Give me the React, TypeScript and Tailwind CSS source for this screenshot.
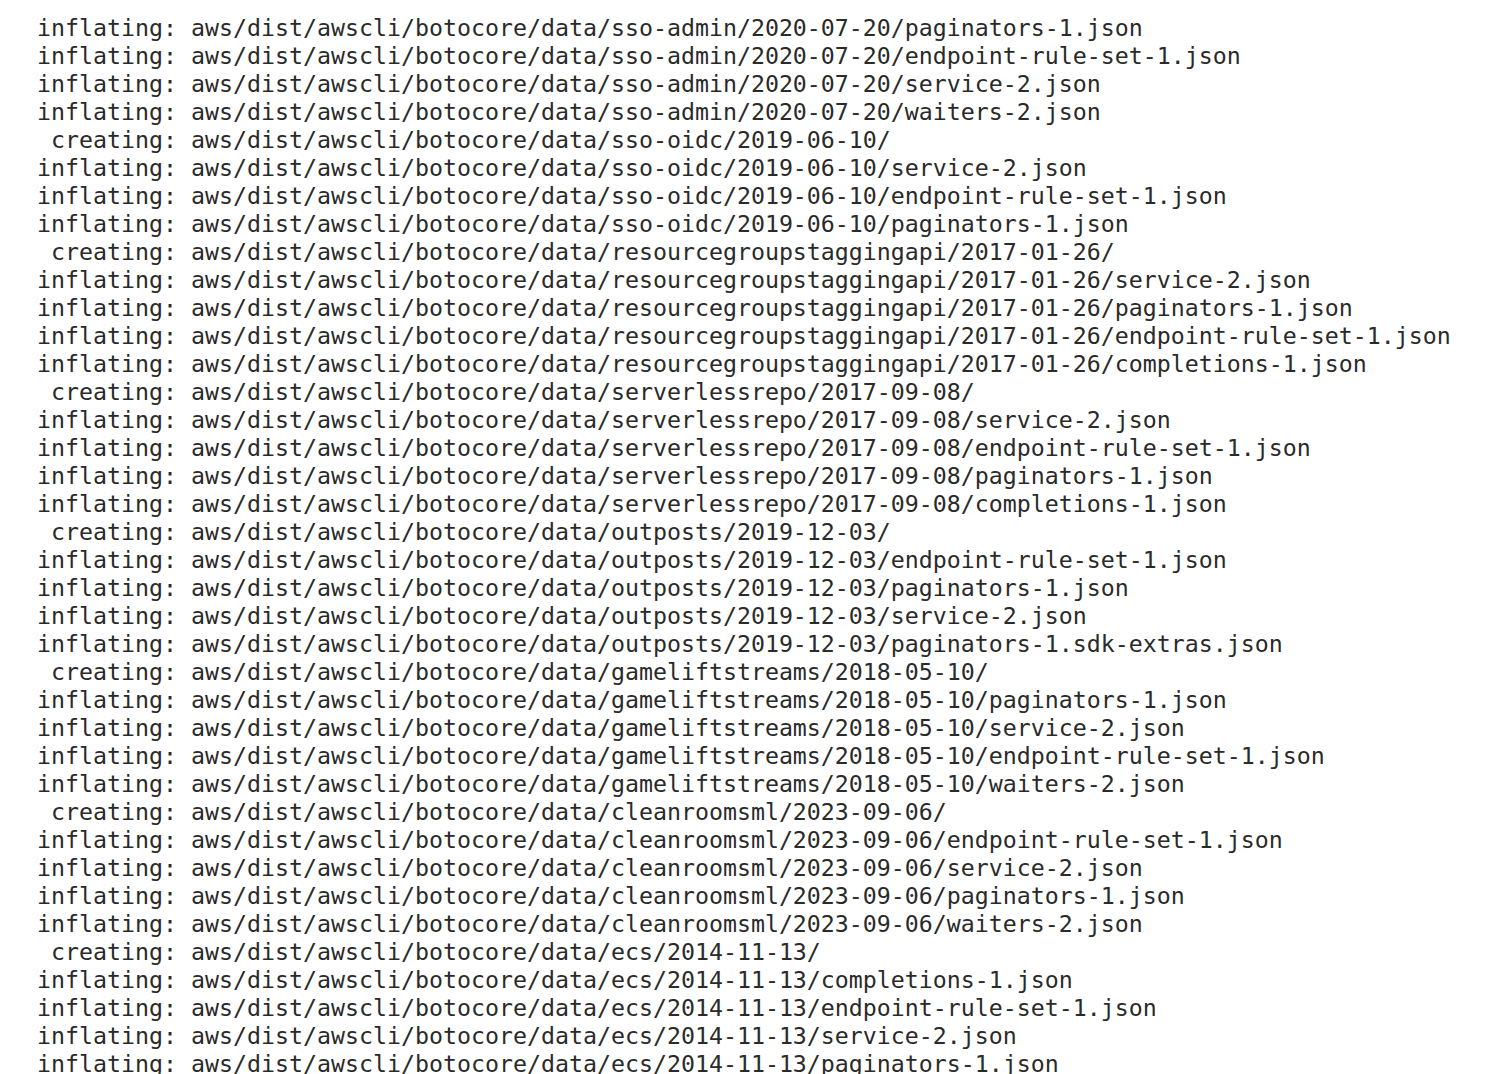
const BASE = 'aws/dist/awscli/botocore/data';

// service folder -> files inflated inside it, in output order
const GROUPS: { dir: string; files: string[]; skipCreate?: boolean }[] = [
  {
    dir: 'sso-admin/2020-07-20',
    files: ['paginators-1.json', 'endpoint-rule-set-1.json', 'service-2.json', 'waiters-2.json'],
    skipCreate: true,
  },
  {
    dir: 'sso-oidc/2019-06-10',
    files: ['service-2.json', 'endpoint-rule-set-1.json', 'paginators-1.json'],
  },
  {
    dir: 'resourcegroupstaggingapi/2017-01-26',
    files: ['service-2.json', 'paginators-1.json', 'endpoint-rule-set-1.json', 'completions-1.json'],
  },
  {
    dir: 'serverlessrepo/2017-09-08',
    files: ['service-2.json', 'endpoint-rule-set-1.json', 'paginators-1.json', 'completions-1.json'],
  },
  {
    dir: 'outposts/2019-12-03',
    files: ['endpoint-rule-set-1.json', 'paginators-1.json', 'service-2.json', 'paginators-1.sdk-extras.json'],
  },
  {
    dir: 'gameliftstreams/2018-05-10',
    files: ['paginators-1.json', 'service-2.json', 'endpoint-rule-set-1.json', 'waiters-2.json'],
  },
  {
    dir: 'cleanroomsml/2023-09-06',
    files: ['endpoint-rule-set-1.json', 'service-2.json', 'paginators-1.json', 'waiters-2.json'],
  },
  {
    dir: 'ecs/2014-11-13',
    files: ['completions-1.json', 'endpoint-rule-set-1.json', 'service-2.json', 'paginators-1.json'],
  },
];

function buildLines() {
  const lines: string[] = [];
  GROUPS.forEach((g) => {
    if (!g.skipCreate) lines.push(` creating: ${BASE}/${g.dir}/`);
    g.files.forEach((f) => lines.push(`inflating: ${BASE}/${g.dir}/${f}`));
  });
  return lines;
}

export default function App() {
  const lines = buildLines();

  return (
    <div className="h-screen w-full overflow-hidden bg-white pl-[37px] pt-[14px]">
      <pre className="m-0 font-['DejaVu_Sans_Mono','Liberation_Mono',monospace] text-[23.25px] leading-[28px] text-[#2a2a2a]">
        {lines.map((line, i) => (
          <div key={i} className="whitespace-pre">
            {line}
          </div>
        ))}
      </pre>
    </div>
  );
}
